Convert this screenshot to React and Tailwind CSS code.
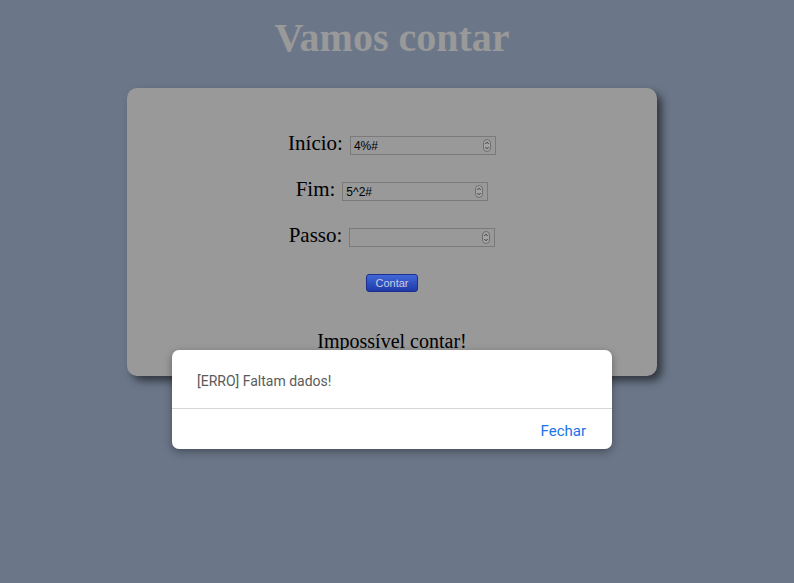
import React from "react";

function Spinner() {
  return (
    <svg width="8" height="13" viewBox="0 0 8 13" className="shrink-0">
      <rect x="0.5" y="0.5" width="7" height="12" rx="3.5" fill="#a3a3a3" stroke="#6f6f6f" />
      <path d="M2.3 5 L4 3.2 L5.7 5" fill="none" stroke="#333" strokeWidth="0.9" />
      <path d="M2.3 8 L4 9.8 L5.7 8" fill="none" stroke="#333" strokeWidth="0.9" />
    </svg>
  );
}

function Field({ label, value }) {
  return (
    <div className="h-[19px] flex items-center justify-center gap-[7px]">
      <span className="relative -top-[3px] text-[21px] leading-[20px] text-black">{label}</span>
      <div className="w-[146px] h-[19px] border border-[#7a7a7a] flex items-center justify-between pl-[3px] pr-[4px]">
        <span className="text-[12px] leading-none text-black font-['Liberation_Sans',Arial,sans-serif]">
          {value}
        </span>
        <Spinner />
      </div>
    </div>
  );
}

export default function App() {
  return (
    <div className="min-h-[583px] w-full bg-[#6b7789] font-['Liberation_Serif','Times_New_Roman',serif] relative">
      <div className="w-[784px] flex flex-col items-center">
        <h1 className="mt-[18px] text-[40px] leading-none font-bold text-[#999999]">Vamos contar</h1>

        <div className="mt-[30px] w-[530px] h-[288px] bg-[#999999] rounded-[10px] shadow-[5px_5px_9px_rgba(0,0,0,0.55)] flex flex-col items-center pt-[48px]">
          <div className="flex flex-col gap-[27px]">
            <Field label="Início:" value="4%#" />
            <Field label="Fim:" value="5^2#" />
            <Field label="Passo:" value="" />
          </div>

          <button className="mt-[27px] w-[52px] h-[18px] rounded-[3px] border border-[#1c2f8a] bg-gradient-to-b from-[#4267d8] to-[#1f3aa8] text-[11px] leading-none text-[#c9cfe6] font-['Liberation_Sans',Arial,sans-serif]">
            Contar
          </button>

          <p className="mt-[39px] text-[20px] leading-[20px] text-black">Impossível contar!</p>
        </div>
      </div>

      <div className="absolute left-[172px] top-[350px] w-[440px] h-[99px] bg-white rounded-[7px] shadow-[0_3px_8px_rgba(0,0,0,0.35)] flex flex-col font-['Roboto','Noto_Sans',sans-serif]">
        <div className="h-[59px] flex items-center pl-[25px] pt-[4px] text-[14px] text-[#5a5a5a] border-b border-[#d6d6d6]">
          [ERRO] Faltam dados!
        </div>
        <div className="flex-1 flex items-center justify-end pr-[26px] pt-[4px]">
          <button className="text-[15px] text-[#1a73e8]">Fechar</button>
        </div>
      </div>
    </div>
  );
}
